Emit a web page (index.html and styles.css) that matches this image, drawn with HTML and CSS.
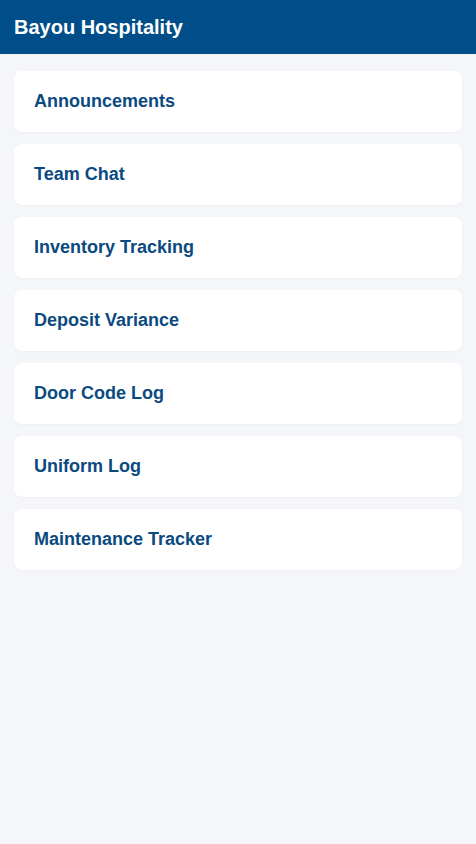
FILE: index.html
```html
<!DOCTYPE html>
<html lang="en">
<head>
<meta charset="utf-8">
<title>Bayou Hospitality</title>
<link rel="stylesheet" href="styles.css">
</head>
<body>
<header class="topbar">
  <h1 class="brand">Bayou Hospitality</h1>
</header>
<main class="menu">
  <a class="card" href="#">Announcements</a>
  <a class="card" href="#">Team Chat</a>
  <a class="card" href="#">Inventory Tracking</a>
  <a class="card" href="#">Deposit Variance</a>
  <a class="card" href="#">Door Code Log</a>
  <a class="card" href="#">Uniform Log</a>
  <a class="card" href="#">Maintenance Tracker</a>
</main>
</body>
</html>
```
FILE: styles.css
```css
* { box-sizing: border-box; }
html, body {
  margin: 0;
  padding: 0;
  background: #f4f6f9;
  font-family: "Liberation Sans", Arial, sans-serif;
}
.topbar {
  background: #004e89;
  height: 54px;
  padding: 0 14px;
  display: flex;
  align-items: center;
}
.brand {
  margin: 0;
  color: #ffffff;
  font-size: 20px;
  font-weight: 700;
}
.menu {
  display: flex;
  flex-direction: column;
  gap: 12px;
  padding: 17px 14px;
}
.card {
  display: flex;
  align-items: center;
  height: 61px;
  padding: 0 20px;
  background: #ffffff;
  border-radius: 8px;
  box-shadow: 0 1px 2px rgba(0, 0, 0, 0.03);
  color: #0b4a80;
  font-size: 18px;
  font-weight: 700;
  text-decoration: none;
}
```
